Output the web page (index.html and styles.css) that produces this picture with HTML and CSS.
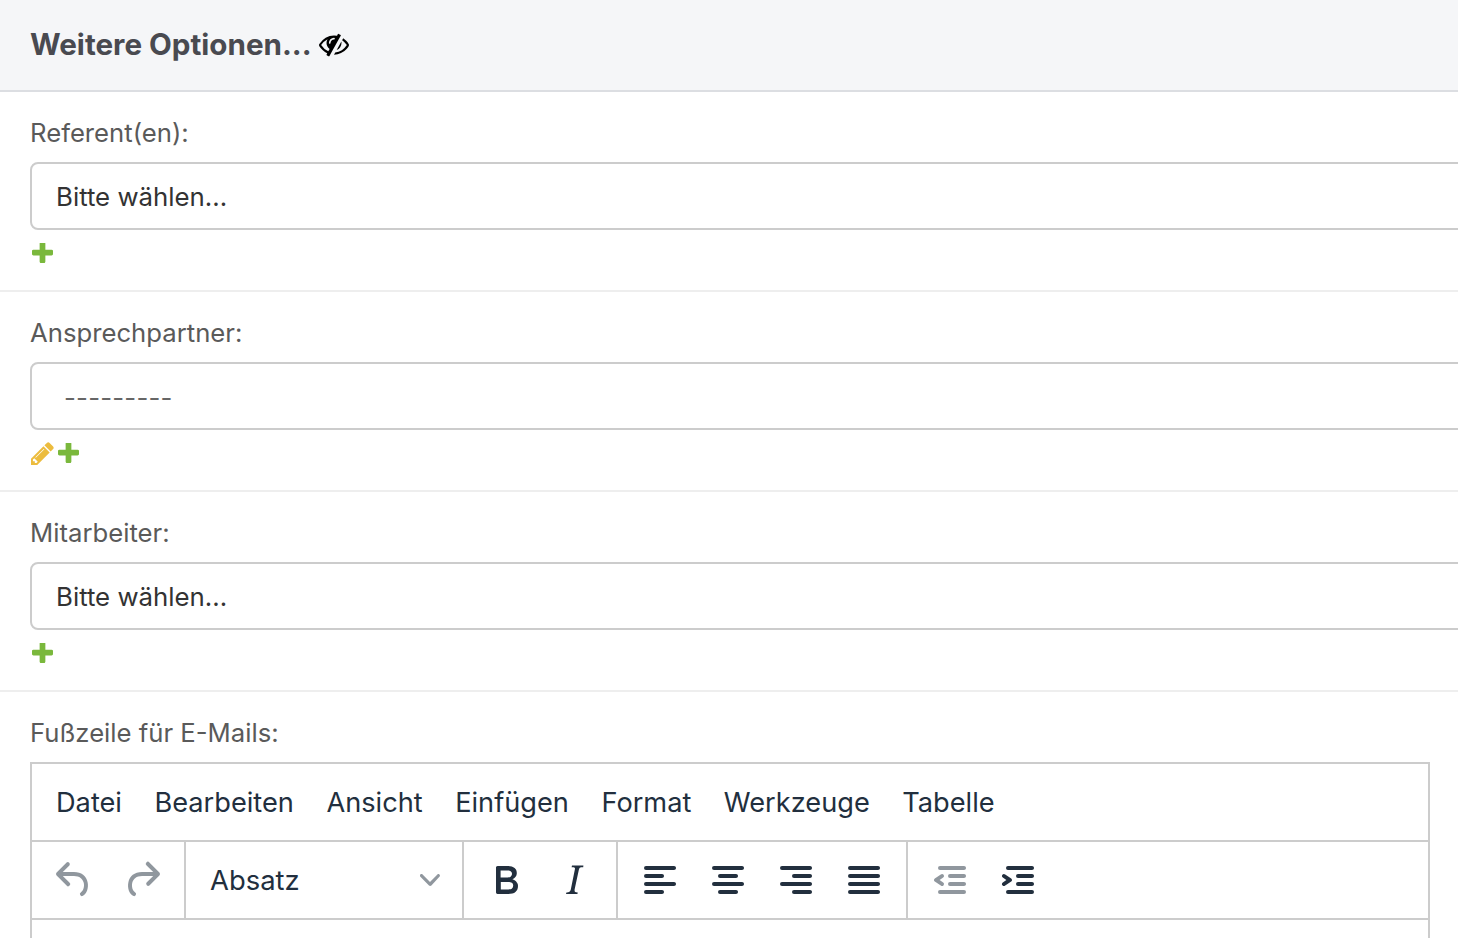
FILE: index.html
```html
<!DOCTYPE html>
<html lang="de">
<head>
<meta charset="utf-8">
<title>Weitere Optionen</title>
<link rel="stylesheet" href="styles.css">
</head>
<body>
<main class="panel">
  <header class="panel-head">
    <h2 class="panel-title">Weitere Optionen...</h2>
    <svg class="eye" viewBox="0 0 1792 1792"><path d="M555 1335l78-141q-87-63-136-159t-49-203q0-121 61-225-229 117-381 353 167 258 427 375zm389-759q0-20-14-34t-34-14q-125 0-214.500 89.500t-89.500 214.500q0 20 14 34t34 14 34-14 14-34q0-86 61-147t147-61q20 0 34-14t14-34zm363-191q0 7-1 9-106 189-316 567t-315 566l-49 89q-10 16-28 16-12 0-134-70-16-10-16-28 0-12 44-87-143-65-263.500-173t-208.500-245q-20-31-20-69t20-69q153-235 380-371t496-136q89 0 180 17l54-97q10-16 28-16 5 0 18 6t31 15.500 33 18.500 31.500 18.500 19.500 11.500q16 10 16 27zm37 447q0 139-79 253.500t-209 164.500l280-502q8 45 8 84zm448 128q0 35-20 69-39 64-109 145-150 172-347.500 267t-419.500 95l74-132q212-18 392.500-137t301.500-307q-115-179-282-294l63-112q95 64 182.500 153t144.500 184q20 34 20 69z"/></svg>
  </header>

  <section class="field">
    <label class="field-label">Referent(en):</label>
    <div class="select"><span>Bitte wählen...</span></div>
    <div class="actions">
      <svg class="ico-plus" viewBox="192 192 1408 1408"><path d="M1600 736v192q0 40-28 68t-68 28h-416v416q0 40-28 68t-68 28h-192q-40 0-68-28t-28-68v-416h-416q-40 0-68-28t-28-68v-192q0-40 28-68t68-28h416v-416q0-40 28-68t68-28h192q40 0 68 28t28 68v416h416q40 0 68 28t28 68z"/></svg>
    </div>
  </section>

  <section class="field">
    <label class="field-label">Ansprechpartner:</label>
    <div class="select select-native"><span>---------</span></div>
    <div class="actions">
      <svg class="ico-pencil" viewBox="128 128 1536 1536"><path d="M491 1536l91-91-235-235-91 91v107h128v128h107zm523-928q0-22-22-22-10 0-17 7l-542 542q-7 7-7 17 0 22 22 22 10 0 17-7l542-542q7-7 7-17zm-54-192l416 416-832 832h-416v-416zm683 96q0 53-37 90l-166 166-416-416 166-165q36-38 90-38 53 0 91 38l235 234q37 39 37 91z"/></svg>
      <svg class="ico-plus" viewBox="192 192 1408 1408"><path d="M1600 736v192q0 40-28 68t-68 28h-416v416q0 40-28 68t-68 28h-192q-40 0-68-28t-28-68v-416h-416q-40 0-68-28t-28-68v-192q0-40 28-68t68-28h416v-416q0-40 28-68t68-28h192q40 0 68 28t28 68v416h416q40 0 68 28t28 68z"/></svg>
    </div>
  </section>

  <section class="field">
    <label class="field-label">Mitarbeiter:</label>
    <div class="select"><span>Bitte wählen...</span></div>
    <div class="actions">
      <svg class="ico-plus" viewBox="192 192 1408 1408"><path d="M1600 736v192q0 40-28 68t-68 28h-416v416q0 40-28 68t-68 28h-192q-40 0-68-28t-28-68v-416h-416q-40 0-68-28t-28-68v-192q0-40 28-68t68-28h416v-416q0-40 28-68t68-28h192q40 0 68 28t28 68v416h416q40 0 68 28t28 68z"/></svg>
    </div>
  </section>

  <section class="field field-last">
    <label class="field-label">Fußzeile für E-Mails:</label>
    <div class="editor">
      <nav class="menubar">
        <span class="menu-item">Datei</span>
        <span class="menu-item">Bearbeiten</span>
        <span class="menu-item">Ansicht</span>
        <span class="menu-item">Einfügen</span>
        <span class="menu-item">Format</span>
        <span class="menu-item">Werkzeuge</span>
        <span class="menu-item">Tabelle</span>
      </nav>
      <div class="toolbar">
        <div class="group group-history">
          <button class="tbtn is-disabled"><svg viewBox="0 0 24 24"><path d="M6.4 8H12c3.700 0 6.200 2 6.800 5.100.6 2.700-.4 5.600-2.300 6.800a1 1 0 0 1-1-1.800c1.100-.6 1.800-2.700 1.400-4.600-.5-2.100-2.100-3.500-4.900-3.500H6.400l3.300 3.300a1 1 0 1 1-1.400 1.400l-5-5a1 1 0 0 1 0-1.400l5-5a1 1 0 0 1 1.400 1.400L6.400 8z"/></svg></button>
          <button class="tbtn is-disabled"><svg viewBox="0 0 24 24"><path d="M17.600 10H12c-2.800 0-4.400 1.400-4.900 3.500-.4 2 .3 4 1.400 4.600a1 1 0 1 1-1 1.800c-2-1.200-2.900-4.100-2.300-6.800.6-3 3-5.100 6.800-5.100h5.600l-3.300-3.300a1 1 0 1 1 1.400-1.400l5 5a1 1 0 0 1 0 1.400l-5 5a1 1 0 0 1-1.400-1.400l3.300-3.300z"/></svg></button>
        </div>
        <div class="group group-format">
          <span class="format-name">Absatz</span>
          <svg class="chevron" viewBox="0 0 10 10"><path d="M8.700 2.200c.3-.3.8-.3 1 0 .4.400.4.900 0 1.200L5.700 7.800c-.3.300-.9.300-1.200 0L.2 3.400a.8.800 0 0 1 0-1.200c.3-.3.8-.3 1.100 0L5 6l3.700-3.800z"/></svg>
        </div>
        <div class="group group-style">
          <button class="tbtn"><svg viewBox="0 0 24 24"><path fill-rule="evenodd" d="M7.800 19c-.3 0-.5 0-.6-.2l-.2-.5V5.700c0-.2 0-.4.200-.5l.6-.2h5c1.500 0 2.700.3 3.500 1 .7.600 1.100 1.400 1.100 2.500a3 3 0 0 1-.6 1.900c-.4.600-1 1-1.600 1.200.4.100.9.300 1.300.6s.8.700 1 1.200c.4.400.5 1 .5 1.600 0 1.300-.4 2.300-1.300 3-.8.700-2.100 1-3.800 1H7.800zm5-8.300c.6 0 1.200-.1 1.600-.5.4-.3.6-.7.6-1.300 0-1.100-.8-1.700-2.300-1.700H9.300v3.500h3.400zm.5 6c.7 0 1.300-.1 1.700-.4.400-.4.600-.9.600-1.500s-.2-1-.7-1.400c-.4-.3-1-.4-2-.4H9.400v3.800h4z"/></svg></button>
          <button class="tbtn"><svg viewBox="0 0 24 24"><path fill-rule="evenodd" d="M16.700 4.700l-.1.900h-.3c-.6 0-1 0-1.400.3-.3.3-.4.600-.5 1.100l-2.100 9.800v.6c0 .5.400.8 1.400.8h.2l-.2.8H8l.2-.8h.2c1.100 0 1.800-.5 2-1.500l2-9.800.1-.5c0-.6-.4-.8-1.400-.8h-.3l.2-.9h5.800z"/></svg></button>
        </div>
        <div class="group group-align">
          <button class="tbtn"><svg viewBox="0 0 24 24"><path fill-rule="evenodd" d="M5 5h14c.6 0 1 .4 1 1s-.4 1-1 1H5a1 1 0 1 1 0-2zm0 4h8c.6 0 1 .4 1 1s-.4 1-1 1H5a1 1 0 1 1 0-2zm0 8h8c.6 0 1 .4 1 1s-.4 1-1 1H5a1 1 0 0 1 0-2zm0-4h14c.6 0 1 .4 1 1s-.4 1-1 1H5a1 1 0 0 1 0-2z"/></svg></button>
          <button class="tbtn"><svg viewBox="0 0 24 24"><path fill-rule="evenodd" d="M5 5h14c.6 0 1 .4 1 1s-.4 1-1 1H5a1 1 0 1 1 0-2zm3 4h8c.6 0 1 .4 1 1s-.4 1-1 1H8a1 1 0 1 1 0-2zm0 8h8c.6 0 1 .4 1 1s-.4 1-1 1H8a1 1 0 0 1 0-2zm-3-4h14c.6 0 1 .4 1 1s-.4 1-1 1H5a1 1 0 0 1 0-2z"/></svg></button>
          <button class="tbtn"><svg viewBox="0 0 24 24"><path fill-rule="evenodd" d="M5 5h14c.6 0 1 .4 1 1s-.4 1-1 1H5a1 1 0 1 1 0-2zm6 4h8c.6 0 1 .4 1 1s-.4 1-1 1h-8a1 1 0 0 1 0-2zm0 8h8c.6 0 1 .4 1 1s-.4 1-1 1h-8a1 1 0 0 1 0-2zm-6-4h14c.6 0 1 .4 1 1s-.4 1-1 1H5a1 1 0 0 1 0-2z"/></svg></button>
          <button class="tbtn"><svg viewBox="0 0 24 24"><path fill-rule="evenodd" d="M5 5h14c.6 0 1 .4 1 1s-.4 1-1 1H5a1 1 0 1 1 0-2zm0 4h14c.6 0 1 .4 1 1s-.4 1-1 1H5a1 1 0 1 1 0-2zm0 4h14c.6 0 1 .4 1 1s-.4 1-1 1H5a1 1 0 0 1 0-2zm0 4h14c.6 0 1 .4 1 1s-.4 1-1 1H5a1 1 0 0 1 0-2z"/></svg></button>
        </div>
        <div class="group group-indent">
          <button class="tbtn is-disabled"><svg viewBox="0 0 24 24"><path fill-rule="evenodd" d="M7 5h12c.6 0 1 .4 1 1s-.4 1-1 1H7a1 1 0 1 1 0-2zm5 4h7c.6 0 1 .4 1 1s-.4 1-1 1h-7a1 1 0 0 1 0-2zm0 4h7c.6 0 1 .4 1 1s-.4 1-1 1h-7a1 1 0 0 1 0-2zm-5 4h12a1 1 0 0 1 0 2H7a1 1 0 0 1 0-2zm1.600-3.800a1 1 0 0 1-1.200 1.600l-3-2a1 1 0 0 1 0-1.600l3-2a1 1 0 0 1 1.200 1.600L6.800 12l1.800 1.200z"/></svg></button>
          <button class="tbtn"><svg viewBox="0 0 24 24"><path fill-rule="evenodd" d="M7 5h12c.6 0 1 .4 1 1s-.4 1-1 1H7a1 1 0 1 1 0-2zm5 4h7c.6 0 1 .4 1 1s-.4 1-1 1h-7a1 1 0 0 1 0-2zm0 4h7c.6 0 1 .4 1 1s-.4 1-1 1h-7a1 1 0 0 1 0-2zm-5 4h12a1 1 0 0 1 0 2H7a1 1 0 0 1 0-2zm-2.600-3.800L6.200 12l-1.800-1.200a1 1 0 0 1 1.200-1.600l3 2a1 1 0 0 1 0 1.600l-3 2a1 1 0 1 1-1.200-1.600z"/></svg></button>
        </div>
      </div>
      <div class="editor-body"></div>
    </div>
  </section>
</main>
</body>
</html>
```

FILE: styles.css
```css
* { box-sizing: border-box; }
html, body { margin: 0; height: 938px; overflow: hidden; background: #fff; }
body { font-family: Inter, "Noto Sans", sans-serif; }
.panel { width: 1458px; height: 938px; overflow: hidden; }
.panel-head {
  height: 92px;
  background: #f5f6f8;
  border-bottom: 2px solid #dcdee2;
  padding: 0 0 3px 30px;
  display: flex;
  align-items: center;
  gap: 7px;
}
.panel-title { margin: 0; font-size: 29.6px; line-height: 40px; font-weight: 700; color: #494a50; }
.eye { width: 30px; height: 30px; fill: #000; display: block; }
.field { padding: 24px 0 26px 30px; border-bottom: 2px solid #eeeeee; }
.field-last { border-bottom: 0; }
.field-label { display: block; font-size: 25.7px; line-height: 34px; color: #5a5a5a; margin-bottom: 12px; }
.select {
  width: 1520px;
  height: 68px;
  border: 2px solid #cccccc;
  border-radius: 8px;
  padding: 1px 0 0 24px;
  display: flex;
  align-items: center;
  font-size: 25.8px;
  color: #333333;
}
.select-native { padding: 2px 0 0 32px; color: #666666; letter-spacing: 0.2px; }
.actions { display: flex; gap: 4px; height: 23px; margin-top: 12px; margin-bottom: -1px; padding-left: 1px; align-items: center; }
.ico-plus { width: 21px; height: 21px; fill: #7ab83c; display: block; }
.ico-plus:first-child { margin-left: 1px; }
.ico-pencil { width: 23px; height: 23px; fill: #ecbc3e; display: block; }
.editor { width: 1400px; height: 400px; border: 2px solid #cccccc; }
.menubar { height: 78px; border-bottom: 2px solid #cccccc; padding: 2px 0 0 24px; display: flex; align-items: center; gap: 32.5px; }
.menu-item { font-size: 27.2px; color: #222f3e; line-height: 40px; }
.toolbar { height: 78px; border-bottom: 2px solid #cccccc; display: flex; }
.group { display: flex; align-items: center; height: 76px; border-right: 2px solid #cccccc; }
.group-history { width: 154px; padding-left: 8px; }
.group-format { width: 278px; padding: 0 22px 0 24px; justify-content: space-between; }
.group-style { width: 154px; padding-left: 8px; }
.group-align { width: 290px; padding-left: 8px; }
.group-indent { border-right: 0; padding-left: 8px; }
.tbtn { width: 68px; height: 68px; padding: 0; border: 0; background: none; display: flex; align-items: center; justify-content: center; fill: #222f3e; }
.tbtn svg { width: 48px; height: 48px; display: block; }
.is-disabled { fill: rgba(34, 47, 62, 0.5); }
.format-name { font-size: 27.4px; color: #222f3e; }
.chevron { width: 20px; height: 20px; fill: rgba(34, 47, 62, 0.5); display: block; }
```
